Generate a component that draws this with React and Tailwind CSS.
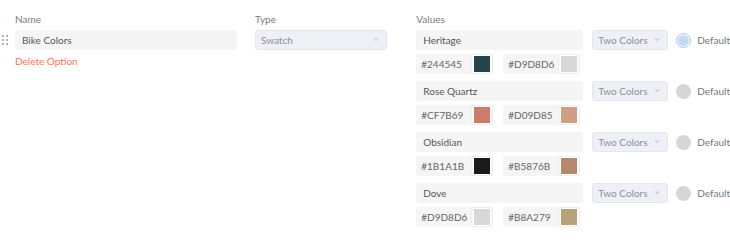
const values = [
  { name: "Heritage", a: "#244545", b: "#D9D8D6", def: true },
  { name: "Rose Quartz", a: "#CF7B69", b: "#D09D85" },
  { name: "Obsidian", a: "#1B1A1B", b: "#B5876B" },
  { name: "Dove", a: "#D9D8D6", b: "#B8A279" },
];

function Caret() {
  return (
    <svg width="6" height="4" viewBox="0 0 6 4" className="shrink-0">
      <path d="M0 0.5 L6 0.5 L3 3.5 Z" fill="#cdd1dc" />
    </svg>
  );
}

function Select({ label, className = "" }) {
  return (
    <div
      className={`h-[20px] flex items-center justify-between pl-[5px] pr-[7px] rounded-[3px] bg-[#eef0f6] border border-[#e3e6ef] text-[#8c8f98] ${className}`}
    >
      <span>{label}</span>
      <Caret />
    </div>
  );
}

function ColorField({ hex }) {
  return (
    <div className="flex h-[20px] w-[77px] rounded-[2px] bg-[#f5f5f5]">
      <div className="flex-1 flex items-center pl-[5px] text-[#666]">{hex}</div>
      <div className="w-[22px] flex items-center justify-center bg-[#f7f7f7] border border-[#eeeeee] rounded-r-[2px]">
        <div className="w-[18px] h-[18px] border border-white" style={{ backgroundColor: hex }} />
      </div>
    </div>
  );
}

function Radio({ on }) {
  if (on) {
    return (
      <div className="w-[15px] h-[15px] rounded-full border border-[#a9c6ec] bg-white flex items-center justify-center">
        <div className="w-[11px] h-[11px] rounded-full bg-[#c5d9f3]" />
      </div>
    );
  }
  return <div className="w-[15px] h-[15px] rounded-full bg-[#d6d6d6]" />;
}

export default function App() {
  return (
    <div
      className="w-[730px] h-[242px] bg-white text-[10px] leading-[12px] flex pt-[13px]"
      style={{ fontFamily: "Lato, 'Open Sans', sans-serif" }}
    >
      <div className="w-[238px] pl-[2px] flex flex-col">
        <div className="pl-[13px] text-[#7a7a7a] mb-[5px]">Name</div>
        <div className="flex items-center gap-[7px]">
          <div className="grid grid-cols-2 gap-x-[2px] gap-y-[2px] w-[6px]">
            {[0, 1, 2, 3, 4, 5].map((i) => (
              <span key={i} className="w-[2px] h-[2px] rounded-full bg-[#9a9a9a]" />
            ))}
          </div>
          <div className="flex-1 h-[20px] rounded-[3px] bg-[#f5f5f5] flex items-center pl-[7px] text-[#555]">
            Bike Colors
          </div>
        </div>
        <div className="pl-[13px] mt-[5px] text-[#ef7a57]">Delete Option</div>
      </div>

      <div className="w-[133px] ml-[18px] flex flex-col">
        <div className="text-[#7a7a7a] mb-[5px]">Type</div>
        <Select label="Swatch" />
      </div>

      <div className="ml-[29px] flex flex-col">
        <div className="text-[#7a7a7a] mb-[5px]">Values</div>
        <div className="flex flex-col gap-[7px]">
          {values.map((v) => (
            <div key={v.name} className="flex flex-col gap-[4px]">
              <div className="flex items-center">
                <div className="w-[167px] h-[20px] rounded-[3px] bg-[#f5f5f5] flex items-center pl-[7px] text-[#555]">
                  {v.name}
                </div>
                <Select label="Two Colors" className="w-[76px] ml-[9px]" />
                <div className="ml-[8px]">
                  <Radio on={v.def} />
                </div>
                <span className="ml-[6px] text-[#777]">Default</span>
              </div>
              <div className="flex gap-[10px]">
                <ColorField hex={v.a} />
                <ColorField hex={v.b} />
              </div>
            </div>
          ))}
        </div>
      </div>
    </div>
  );
}
